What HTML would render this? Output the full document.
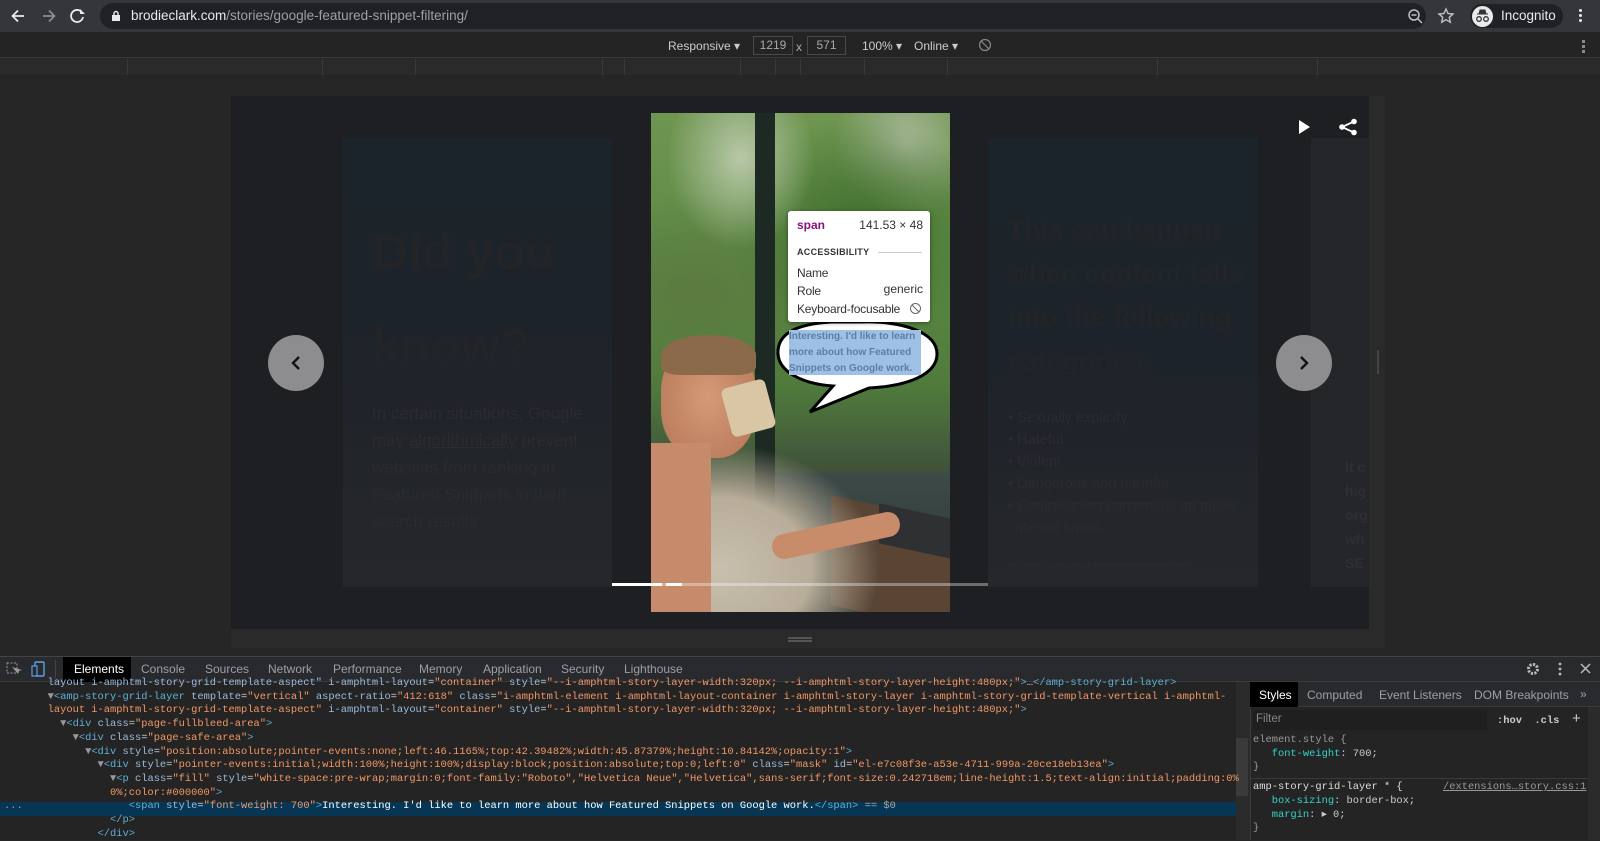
<!DOCTYPE html>
<html><head><meta charset="utf-8"><style>
*{box-sizing:border-box;margin:0;padding:0}
body{width:1600px;height:840px;overflow:hidden;background:#262626;font-family:"Liberation Sans",sans-serif;position:relative;color:#ddd}
.a{position:absolute}
.code{font-family:"Liberation Mono",monospace;font-size:10.4px;white-space:pre;color:#cfd0d0;line-height:13.7px}
.t{color:#5db0d7}.n{color:#9bbbdc}.v{color:#f29766}
.tab{position:absolute;top:656px;height:26px;line-height:26px;font-size:12px;color:#9aa0a6}
</style></head><body>
<div class="a" style="left:0;top:0;width:1600px;height:32px;background:#35363a"></div>
<svg class="a" style="left:8px;top:6px" width="80" height="20" viewBox="0 0 80 20"><g stroke="#e8eaed" stroke-width="1.8" fill="none"><path d="M16 10H5M10 4.5L4.5 10 10 15.5"/></g><g stroke="#8a8c90" stroke-width="1.8" fill="none"><path d="M35 10H46M41 4.5L46.5 10 41 15.5"/></g><path d="M79 6.5A6 6 0 1 0 80 11" stroke="#e8eaed" stroke-width="1.8" fill="none" transform="translate(-5,0)"/><path d="M72 3v5h5z" fill="#e8eaed"/></svg>
<div class="a" style="left:100px;top:3px;width:1326px;height:26px;border-radius:13px;background:#202124"></div>
<svg class="a" style="left:111px;top:10px" width="10" height="12"><rect x="1" y="5" width="8" height="6" fill="#e8eaed"/><path d="M3 5V3.5a2 2 0 0 1 4 0V5" stroke="#e8eaed" stroke-width="1.4" fill="none"/></svg>
<div class="a" style="left:131px;top:8px;font-size:13.5px;color:#9aa0a6"><span style="color:#e8eaed">brodieclark.com</span>/stories/google-featured-snippet-filtering/</div>
<svg class="a" style="left:1406px;top:7px" width="52" height="18"><circle cx="8" cy="8" r="5" stroke="#bdc1c6" stroke-width="1.5" fill="none"/><path d="M5.5 8h5M12 12l4 4" stroke="#bdc1c6" stroke-width="1.5"/><path d="M40 2l2 4.5 5 .5-3.7 3.3 1 4.9L40 12.7l-4.3 2.5 1-4.9L33 7l5-.5z" stroke="#bdc1c6" stroke-width="1.4" fill="none"/></svg>
<div class="a" style="left:1470px;top:4px;width:93px;height:24px;border-radius:12px;background:#202124"></div>
<div class="a" style="left:1472px;top:6px;width:21px;height:21px;border-radius:50%;background:#e8eaed"></div>
<svg class="a" style="left:1474px;top:9px" width="17" height="14"><path d="M3 5h11M5 5l1-4h5l1 4" fill="#333" stroke="#333"/><circle cx="5" cy="10" r="2.3" stroke="#333" stroke-width="1.3" fill="none"/><circle cx="12" cy="10" r="2.3" stroke="#333" stroke-width="1.3" fill="none"/></svg>
<div class="a" style="left:1501px;top:8px;font-size:13.5px;color:#e8eaed">Incognito</div>
<div class="a" style="left:1579px;top:9px;width:3px;height:3px;background:#e8eaed;box-shadow:0 5px #e8eaed,0 10px #e8eaed;border-radius:50%"></div>
<div class="a" style="left:0;top:32px;width:1600px;height:26px;background:#242424;border-bottom:1px solid #3a3a3a"></div>
<div class="a" style="left:668px;top:39px;font-size:12px;color:#ccc">Responsive ▾</div>
<div class="a" style="left:753px;top:36px;width:40px;height:19px;border:1px solid #4a4a4a;font-size:12px;color:#aaa;text-align:center;line-height:17px">1219</div>
<div class="a" style="left:796px;top:40px;font-size:12px;color:#aaa">x</div>
<div class="a" style="left:807px;top:36px;width:39px;height:19px;border:1px solid #4a4a4a;font-size:12px;color:#aaa;text-align:center;line-height:17px">571</div>
<div class="a" style="left:862px;top:39px;font-size:12px;color:#ccc">100% ▾</div>
<div class="a" style="left:914px;top:39px;font-size:12px;color:#ccc">Online ▾</div>
<svg class="a" style="left:978px;top:38px" width="14" height="14"><circle cx="7" cy="7" r="5.5" stroke="#888" stroke-width="1.2" fill="none"/><path d="M3 3l8 8" stroke="#888" stroke-width="1.2"/></svg>
<div class="a" style="left:1582px;top:40px;width:3px;height:3px;background:#888;box-shadow:0 5px #888,0 10px #888"></div>
<div class="a" style="left:0;top:59px;width:1600px;height:16px;background:#2a2a2a"></div>
<div class="a" style="left:127px;top:59px;width:1px;height:16px;background:#3a3a3a;box-shadow:195px 0 #3a3a3a,288px 0 #3a3a3a,475px 0 #3a3a3a,497px 0 #3a3a3a,613px 0 #3a3a3a,648px 0 #3a3a3a,673px 0 #3a3a3a,737px 0 #3a3a3a,820px 0 #3a3a3a,1030px 0 #3a3a3a,1190px 0 #3a3a3a"></div>
<div class="a" style="left:231px;top:96px;width:1138px;height:533px;background:#1e1f22"></div>
<div class="a" style="left:231px;top:629px;width:1154px;height:19px;background:#2a2a2a"></div>
<div class="a" style="left:788px;top:637px;width:24px;height:2px;background:#555;box-shadow:0 3px #555"></div>
<div class="a" style="left:1369px;top:96px;width:16px;height:533px;background:#2a2a2a"></div>
<div class="a" style="left:1377px;top:350px;width:2px;height:24px;background:#444"></div>
<div class="a" style="left:343px;top:138px;width:269px;height:449px;background:linear-gradient(#1b242b 0%,#1d232a 40%,#26272a 100%)"></div>
<div class="a" style="left:372px;top:205px;font-size:50px;font-weight:bold;line-height:94px;color:#222427">Did you<br>know?</div>
<div class="a" style="left:372px;top:400px;font-size:17px;line-height:27px;color:#2a2b2e;width:240px">In certain situations, Google may <u>algorithmically</u> prevent websites from ranking in Featured Snippets in their search results.</div>
<div class="a" style="left:268px;top:335px;width:56px;height:56px;border-radius:50%;background:#8d8d8f"></div>
<svg class="a" style="left:286px;top:353px" width="20" height="20"><path d="M13 4L7 10l6 6" stroke="#111" stroke-width="2.4" fill="none"/></svg>
<div class="a" style="left:988px;top:138px;width:270px;height:449px;background:linear-gradient(#1b242b 0%,#1d232a 50%,#26272a 100%)"></div>
<div class="a" style="left:1008px;top:207px;font-size:27px;font-weight:bold;line-height:44px;color:#222427;width:250px">This can happen when content falls into the following categories:</div>
<div class="a" style="left:1008px;top:407px;font-size:14.5px;line-height:22px;color:#2a2b2e;width:250px">• Sexually explicity<br>• Hateful<br>• Violent<br>• Dangerous and harmful<br>• Contradicting consensus on public &nbsp;interest topics</div>
<div class="a" style="left:1008px;top:562px;font-size:7px;color:#2c2d30">See: https://support.google.com/websearch/answer/935170</div>
<div class="a" style="left:1311px;top:138px;width:58px;height:449px;background:#25262a"></div>
<div class="a" style="left:1345px;top:455px;font-size:14px;font-weight:bold;line-height:24px;color:#2e2f33">It c<br>hig<br>org<br>wh<br>SE</div>
<div class="a" style="left:1276px;top:335px;width:56px;height:56px;border-radius:50%;background:#8d8d8f"></div>
<svg class="a" style="left:1294px;top:353px" width="20" height="20"><path d="M7 4l6 6-6 6" stroke="#111" stroke-width="2.4" fill="none"/></svg>
<svg class="a" style="left:1296px;top:118px" width="64" height="18"><path d="M3 2l11 7-11 7z" fill="#fff"/><g fill="#fff"><circle cx="58" cy="3.5" r="2.8"/><circle cx="46" cy="9" r="2.8"/><circle cx="58" cy="14.5" r="2.8"/></g><path d="M58 3.5L46 9l12 5.5" stroke="#fff" stroke-width="1.8" fill="none"/></svg>
<div class="a" style="left:651px;top:113px;width:299px;height:499px;overflow:hidden;background:linear-gradient(180deg,#6f9650 0%,#5d8a45 30%,#4f7a3c 55%,#3d4a3a 75%,#3a3a38 100%)">
  <div class="a" style="left:0;top:0;width:299px;height:300px;background:radial-gradient(ellipse at 30% 15%,#b8c8a8 0,transparent 25%),radial-gradient(ellipse at 70% 40%,#3e6d2c 0,transparent 45%),radial-gradient(ellipse at 15% 60%,#5b7a40 0,transparent 40%),radial-gradient(ellipse at 85% 10%,#a8b898 0,transparent 20%)"></div>
  <div class="a" style="left:104px;top:0;width:20px;height:499px;background:#1d2a24"></div>
  <div class="a" style="left:124px;top:360px;width:175px;height:140px;background:linear-gradient(#3c4a48,#2f3433)"></div>
  <div class="a" style="left:180px;top:395px;width:120px;height:110px;background:#5a4535;transform:skewY(12deg)"></div>
  <div class="a" style="left:228px;top:398px;width:72px;height:40px;background:#2e3032;transform:skewY(12deg)"></div>
  <div class="a" style="left:0;top:330px;width:230px;height:180px;background:radial-gradient(ellipse at 30% 70%,#c8bfae 0,#b8ad99 40%,transparent 70%)"></div>
  <div class="a" style="left:10px;top:225px;width:95px;height:120px;border-radius:45% 45% 40% 40%;background:radial-gradient(ellipse at 50% 50%,#d49a78,#b57555)"></div>
  <div class="a" style="left:10px;top:222px;width:95px;height:40px;border-radius:50% 50% 20% 20%;background:#8a6a4a"></div>
  <div class="a" style="left:75px;top:270px;width:45px;height:50px;background:#d8c6a5;border-radius:6px;transform:rotate(-15deg)"></div>
  <div class="a" style="left:0;top:330px;width:60px;height:170px;background:#c58b6a"></div>
  <div class="a" style="left:120px;top:410px;width:130px;height:25px;background:#c88c6a;border-radius:12px;transform:rotate(-12deg)"></div>
</div>
<svg class="a" style="left:772px;top:318px" width="180" height="110"><path d="M60 4C20 6 5 18 6 36c1 18 25 30 55 32L38 94 97 70c40-2 68-14 68-34C165 14 130 3 90 4z" fill="#fff" stroke="#000" stroke-width="3"/></svg>
<div class="a" style="left:789px;top:330px;width:132px;height:45px;background:#9dc0e4"></div>
<div class="a" style="left:789px;top:329px;font-size:10px;line-height:16px;color:#5b7fa8;font-weight:bold">Interesting. I'd like to learn<br>more about how Featured<br>Snippets on Google work.</div>
<div class="a" style="left:788px;top:211px;width:142px;height:111px;background:#fff;border-radius:3px;box-shadow:0 1px 4px rgba(0,0,0,.4)"></div>
<div class="a" style="left:797px;top:218px;font-size:12px;font-weight:bold;color:#881280">span</div>
<div class="a" style="left:850px;top:218px;font-size:12px;color:#333;width:73px;text-align:right;white-space:nowrap">141.53 × 48</div>
<div class="a" style="left:797px;top:247px;font-size:9px;font-weight:bold;color:#333;letter-spacing:.3px">ACCESSIBILITY</div>
<div class="a" style="left:878px;top:252px;width:44px;height:1px;background:#ccc"></div>
<div class="a" style="left:797px;top:264px;font-size:12px;color:#333;line-height:18px;white-space:nowrap;letter-spacing:-.2px">Name<br>Role<br>Keyboard-focusable</div>
<div class="a" style="left:860px;top:282px;width:63px;text-align:right;font-size:12px;color:#333">generic</div>
<svg class="a" style="left:909px;top:302px" width="13" height="13"><circle cx="6.5" cy="6.5" r="5" stroke="#666" fill="none"/><path d="M3 3l7 7" stroke="#666"/></svg>
<div class="a" style="left:612px;top:583px;width:376px;height:3px;background:rgba(255,255,255,.35)"></div>
<div class="a" style="left:612px;top:583px;width:50px;height:3px;background:#fff"></div>
<div class="a" style="left:666px;top:583px;width:16px;height:3px;background:#fff"></div>
<div class="a" style="left:0;top:656px;width:1600px;height:26px;background:#292a2d;border-top:1px solid #444;border-bottom:1px solid #3a3a3a"></div>
<svg class="a" style="left:6px;top:661px" width="40" height="16"><rect x="1" y="2" width="10" height="10" stroke="#999" fill="none" stroke-dasharray="2 1.5"/><path d="M6 6l6 7 1-3 3-1z" fill="#999"/><rect x="29" y="1" width="9" height="14" rx="1" stroke="#5aa0e6" stroke-width="1.4" fill="none"/><rect x="26" y="5" width="5" height="10" fill="#292a2d" stroke="#5aa0e6" stroke-width="1.2"/></svg>
<div class="a" style="left:55px;top:660px;width:1px;height:18px;background:#444"></div>
<div class="a" style="left:63px;top:657px;width:68px;height:25px;background:#000"></div>
<div class="tab" style="left:74px;color:#fff">Elements</div>
<div class="tab" style="left:141px">Console</div>
<div class="tab" style="left:205px">Sources</div>
<div class="tab" style="left:268px">Network</div>
<div class="tab" style="left:333px">Performance</div>
<div class="tab" style="left:419px">Memory</div>
<div class="tab" style="left:483px">Application</div>
<div class="tab" style="left:561px">Security</div>
<div class="tab" style="left:624px">Lighthouse</div>
<svg class="a" style="left:1524px;top:660px" width="76" height="18"><circle cx="9" cy="9" r="4.5" stroke="#bbb" stroke-width="3" fill="none" stroke-dasharray="2.2 1.3"/><circle cx="9" cy="9" r="2" fill="#292a2d"/><g fill="#bbb"><circle cx="36" cy="4" r="1.4"/><circle cx="36" cy="9" r="1.4"/><circle cx="36" cy="14" r="1.4"/></g><path d="M57 4l9 9M66 4l-9 9" stroke="#bbb" stroke-width="1.5"/></svg>
<div class="a" style="left:0;top:682px;width:1236px;height:158px;background:#242424"></div>
<div class="a" style="left:1236px;top:682px;width:14px;height:158px;background:#2b2b2b"></div>
<div class="a" style="left:1236px;top:738px;width:12px;height:58px;background:#3a3a3a"></div>
<div class="a" style="left:0;top:802px;width:1236px;height:14px;background:#073655"></div>
<div class="a code" style="left:4px;top:677px">       <span class="n">layout i-amphtml-story-grid-template-aspect"</span> <span class="n">i-amphtml-layout</span>=<span class="v">"container"</span> <span class="n">style</span>=<span class="v">"--i-amphtml-story-layer-width:320px; --i-amphtml-story-layer-height:480px;"</span><span class="t">&gt;</span>…<span class="t">&lt;/amp-story-grid-layer&gt;</span>
       <span style="color:#999">▼</span><span class="t">&lt;amp-story-grid-layer</span> <span class="n">template</span>=<span class="v">"vertical"</span> <span class="n">aspect-ratio</span>=<span class="v">"412:618"</span> <span class="n">class</span>=<span class="v">"i-amphtml-element i-amphtml-layout-container i-amphtml-story-layer i-amphtml-story-grid-template-vertical i-amphtml-</span>
       <span class="v">layout i-amphtml-story-grid-template-aspect"</span> <span class="n">i-amphtml-layout</span>=<span class="v">"container"</span> <span class="n">style</span>=<span class="v">"--i-amphtml-story-layer-width:320px; --i-amphtml-story-layer-height:480px;"</span><span class="t">&gt;</span>
         <span style="color:#999">▼</span><span class="t">&lt;div</span> <span class="n">class</span>=<span class="v">"page-fullbleed-area"</span><span class="t">&gt;</span>
           <span style="color:#999">▼</span><span class="t">&lt;div</span> <span class="n">class</span>=<span class="v">"page-safe-area"</span><span class="t">&gt;</span>
             <span style="color:#999">▼</span><span class="t">&lt;div</span> <span class="n">style</span>=<span class="v">"position:absolute;pointer-events:none;left:46.1165%;top:42.39482%;width:45.87379%;height:10.84142%;opacity:1"</span><span class="t">&gt;</span>
               <span style="color:#999">▼</span><span class="t">&lt;div</span> <span class="n">style</span>=<span class="v">"pointer-events:initial;width:100%;height:100%;display:block;position:absolute;top:0;left:0"</span> <span class="n">class</span>=<span class="v">"mask"</span> <span class="n">id</span>=<span class="v">"el-e7c08f3e-a53e-4711-999a-20ce18eb13ea"</span><span class="t">&gt;</span>
                 <span style="color:#999">▼</span><span class="t">&lt;p</span> <span class="n">class</span>=<span class="v">"fill"</span> <span class="n">style</span>=<span class="v">"white-space:pre-wrap;margin:0;font-family:"Roboto","Helvetica Neue","Helvetica",sans-serif;font-size:0.242718em;line-height:1.5;text-align:initial;padding:0%</span>
                 <span class="v">0%;color:#000000"</span><span class="t">&gt;</span>
<span style="color:#999">...</span>                 <span class="t">&lt;span</span> <span class="n">style</span>=<span class="v">"font-weight: 700"</span><span class="t">&gt;</span><span style="color:#fff">Interesting. I'd like to learn more about how Featured Snippets on Google work.</span><span class="t">&lt;/span&gt;</span> <span style="color:#aaa">== $0</span>
                 <span class="t">&lt;/p&gt;</span>
               <span class="t">&lt;/div&gt;</span></div>
<div class="a" style="left:1250px;top:682px;width:350px;height:158px;background:#242424;border-left:1px solid #3a3a3a"></div>
<div class="a" style="left:1250px;top:682px;width:350px;height:25px;background:#292a2d;border-bottom:1px solid #3a3a3a"></div>
<div class="a" style="left:1250px;top:682px;width:48px;height:25px;background:#000"></div>
<div class="a" style="left:1259px;top:688px;font-size:12px;color:#fff">Styles</div>
<div class="a" style="left:1307px;top:688px;font-size:12px;color:#9aa0a6">Computed</div>
<div class="a" style="left:1379px;top:688px;font-size:12px;color:#9aa0a6">Event Listeners</div>
<div class="a" style="left:1474px;top:688px;font-size:12px;color:#9aa0a6">DOM Breakpoints</div>
<div class="a" style="left:1580px;top:687px;font-size:12px;color:#9aa0a6">»</div>
<div class="a" style="left:1253px;top:710px;width:234px;height:20px;background:#1f1f1f"></div>
<div class="a" style="left:1256px;top:713px;font-size:11.5px;color:#888">Filter</div>
<div class="a code" style="left:1497px;top:713px;color:#ccc;font-weight:bold">:hov  .cls  <span style="font-size:15px;font-weight:normal">+</span></div>
<div class="a" style="left:1250px;top:778px;width:340px;height:1px;background:#3a3a3a"></div>
<div class="a" style="left:1588px;top:707px;width:12px;height:133px;background:#2b2b2b"></div>
<div class="a code" style="left:1253px;top:734px;color:#999">element.style {
   <span style="color:#35d4c7">font-weight</span><span style="color:#ccc">: 700;</span>
}</div>
<div class="a code" style="left:1253px;top:781px;color:#ddd">amp-story-grid-layer * {</div>
<div class="a code" style="left:1443px;top:781px;color:#999;text-decoration:underline">/extensions…story.css:1</div>
<div class="a code" style="left:1253px;top:795px;color:#ccc">   <span style="color:#35d4c7">box-sizing</span>: border-box;
   <span style="color:#35d4c7">margin</span>: ▸ 0;
<span style="color:#999">}</span></div>
</body></html>
